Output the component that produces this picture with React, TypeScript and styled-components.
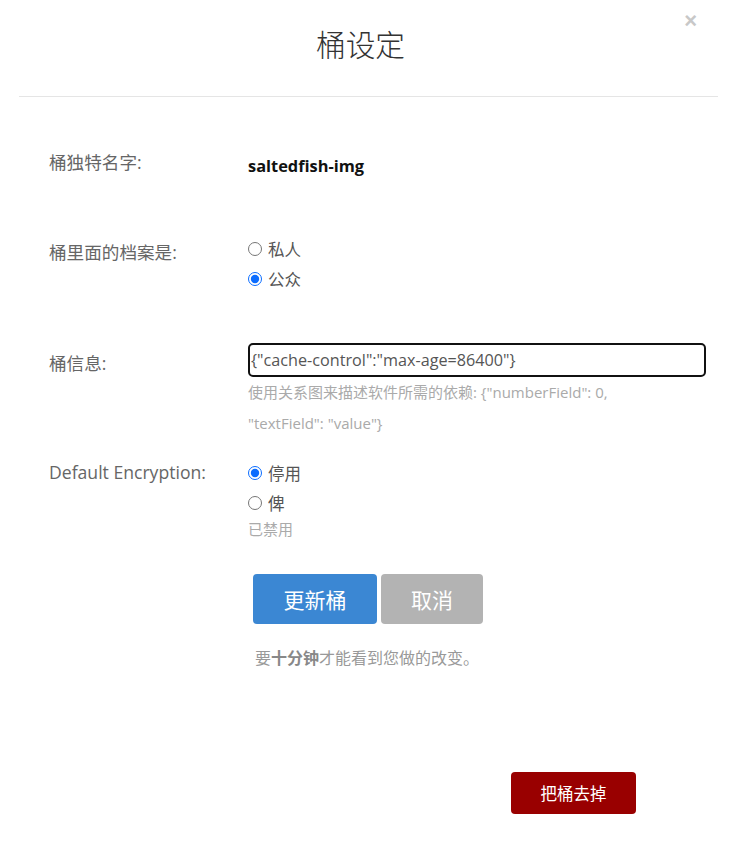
import React from "react";
import styled, { createGlobalStyle } from "styled-components";

const Global = createGlobalStyle`
  html, body { margin: 0; padding: 0; background: #fff; }
  body {
    font-family: "Open Sans", "Noto Sans CJK SC", sans-serif;
    color: #666;
  }
  * { box-sizing: border-box; }
`;

const Page = styled.div`
  position: relative;
  width: 737px;
  min-height: 852px;
  background: #fff;
`;

const Header = styled.header`
  height: 97px;
  margin: 0 19px;
  border-bottom: 1px solid #e5e5e5;
  padding: 24px 16px 0 0;
  text-align: center;
`;

const Title = styled.h1`
  margin: 0;
  font-size: 29.7px;
  line-height: 42px;
  font-weight: 300;
  color: #333;
`;

const Close = styled.button`
  position: absolute;
  top: 9px;
  right: 40px;
  border: 0;
  background: none;
  padding: 0;
  font-family: "Liberation Sans", sans-serif;
  font-size: 22px;
  line-height: 24px;
  font-weight: 700;
  color: #c8c8c8;
  cursor: pointer;
`;

const Form = styled.div`
  padding: 53px 31px 0 49px;
`;

const Row = styled.div<{ $top: number }>`
  display: grid;
  grid-template-columns: 199px 1fr;
  margin-top: ${(p) => p.$top}px;
  align-items: start;
`;

const Label = styled.div<{ $pad?: number }>`
  font-size: 17.6px;
  line-height: 24px;
  color: #666;
  padding-top: ${(p) => p.$pad ?? 0}px;
`;

const Value = styled.div`
  font-size: 16.4px;
  line-height: 24px;
  font-weight: 700;
  color: #111;
  padding-top: 4px;
`;

const Options = styled.div<{ $pad?: number }>`
  display: flex;
  flex-direction: column;
  margin-top: ${(p) => p.$pad ?? 0}px;
`;

const Option = styled.label`
  display: flex;
  align-items: center;
  height: 30px;
  font-size: 16.5px;
  color: #555;
`;

const Radio = styled.input.attrs({ type: "radio" })`
  width: 14px;
  height: 14px;
  margin: 0 6px 0 0;
  accent-color: #0a6cff;
`;

const Input = styled.input`
  display: block;
  width: 100%;
  height: 34px;
  border: 2px solid #111;
  border-radius: 5px;
  padding: 0 1px;
  font-family: "Open Sans", "Noto Sans CJK SC", sans-serif;
  font-size: 16.2px;
  color: #555;
  outline: none;
`;

const Help = styled.div<{ $lh: number }>`
  font-size: 15px;
  line-height: ${(p) => p.$lh}px;
  color: #aaa;
`;

const Actions = styled.div`
  display: flex;
  gap: 4px;
  margin: 34px 0 0 204px;
`;

const Btn = styled.button<{ $bg: string; $w: number }>`
  width: ${(p) => p.$w}px;
  height: 50px;
  border: 0;
  border-radius: 4px;
  background: ${(p) => p.$bg};
  color: #fff;
  font-family: "Open Sans", "Noto Sans CJK SC", sans-serif;
  font-size: 21px;
  cursor: pointer;
`;

const Note = styled.p`
  margin: 22px 0 0 206px;
  font-size: 16px;
  line-height: 24px;
  color: #999;
  b { font-weight: 700; color: #888; }
`;

const Footer = styled.div`
  display: flex;
  justify-content: flex-end;
  padding: 102px 101px 0 0;
`;

const Danger = styled.button`
  width: 125px;
  height: 42px;
  border: 0;
  border-radius: 4px;
  background: #990000;
  color: #fff;
  font-family: "Open Sans", "Noto Sans CJK SC", sans-serif;
  font-size: 16.5px;
  cursor: pointer;
`;

export default function App() {
  return (
    <Page>
      <Global />
      <Header>
        <Title>桶设定</Title>
      </Header>
      <Close aria-label="close">×</Close>
      <Form>
        <Row $top={0}>
          <Label>桶独特名字:</Label>
          <Value>saltedfish-img</Value>
        </Row>
        <Row $top={62}>
          <Label>桶里面的档案是:</Label>
          <Options $pad={-6}>
            <Option><Radio name="acl" />私人</Option>
            <Option><Radio name="acl" defaultChecked />公众</Option>
          </Options>
        </Row>
        <Row $top={49}>
          <Label $pad={8}>桶信息:</Label>
          <div>
            <Input defaultValue={'{"cache-control":"max-age=86400"}'} />
            <Help $lh={31}>
              使用关系图来描述软件所需的依赖: {'{"numberField": 0,'}
              <br />
              {'"textField": "value"}'}
            </Help>
          </div>
        </Row>
        <Row $top={21}>
          <Label>Default Encryption:</Label>
          <Options $pad={-2}>
            <Option><Radio name="enc" defaultChecked />停用</Option>
            <Option><Radio name="enc" />俾</Option>
            <Help $lh={22}>已禁用</Help>
          </Options>
        </Row>
        <Actions>
          <Btn $bg="#3b87d3" $w={124}>更新桶</Btn>
          <Btn $bg="#b3b3b3" $w={102}>取消</Btn>
        </Actions>
        <Note>
          要<b>十分钟</b>才能看到您做的改变。
        </Note>
      </Form>
      <Footer>
        <Danger>把桶去掉</Danger>
      </Footer>
    </Page>
  );
}
